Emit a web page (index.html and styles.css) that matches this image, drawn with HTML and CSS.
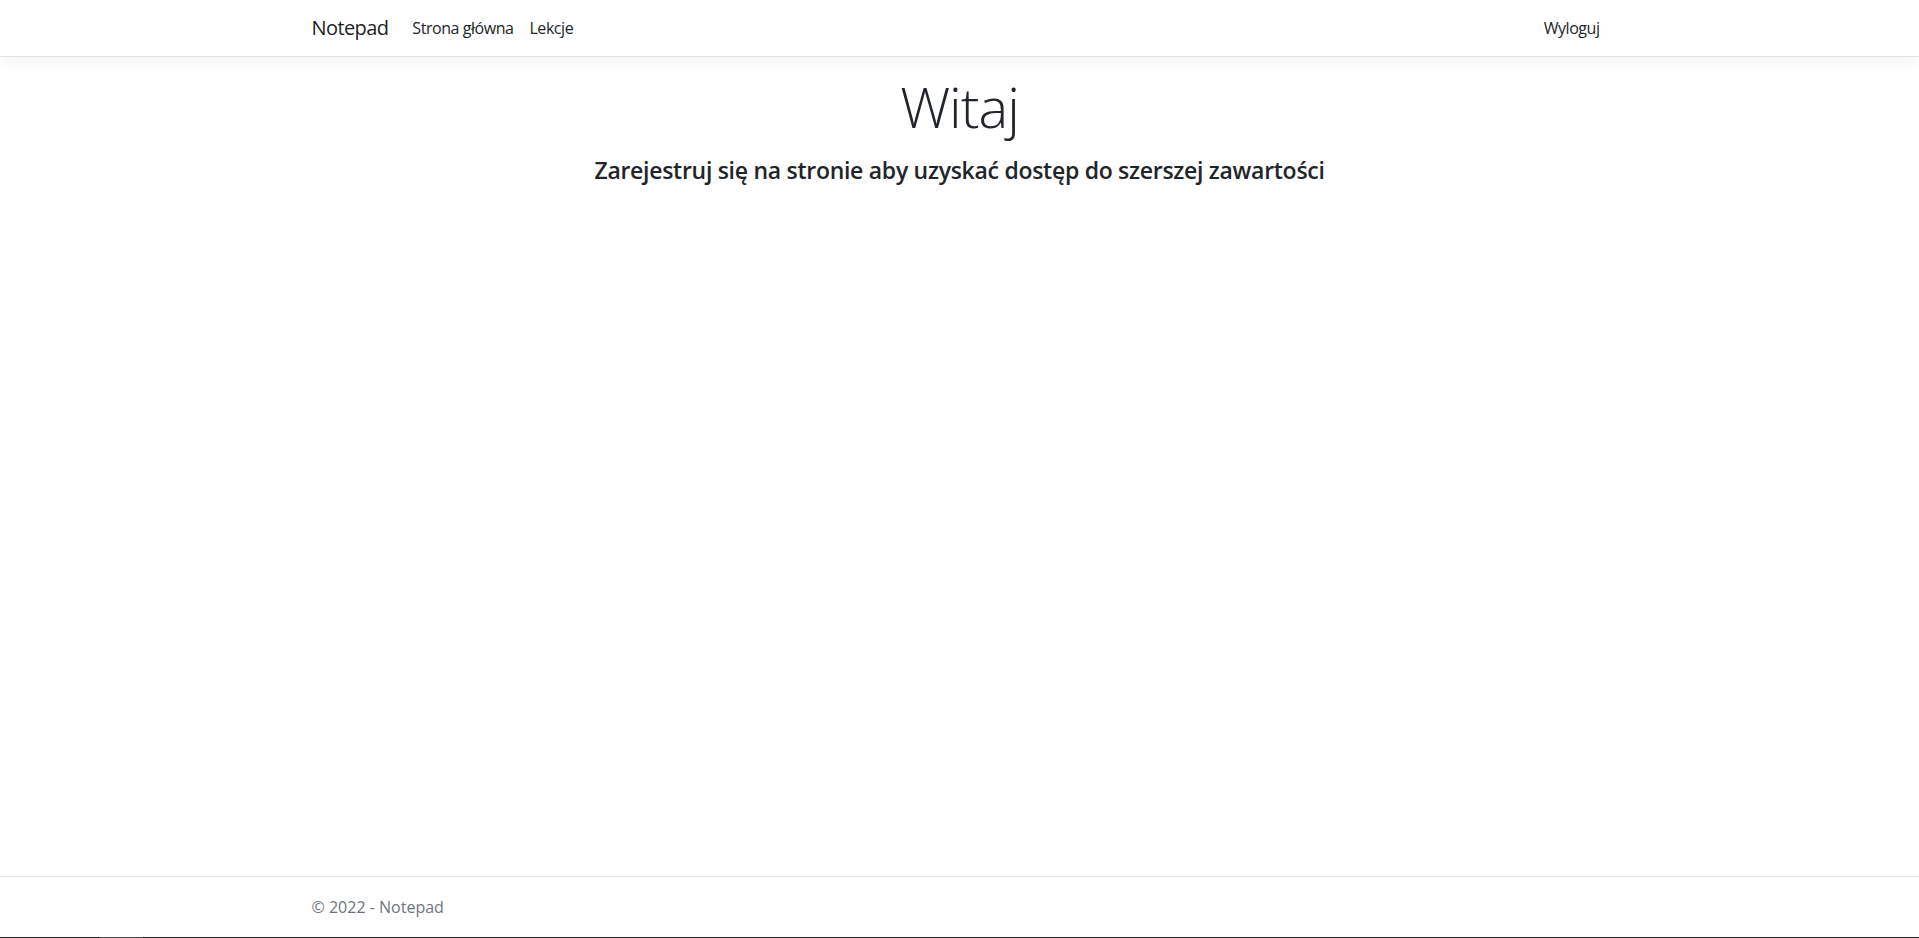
FILE: index.html
```html
<!DOCTYPE html>
<html lang="pl">
<head>
<meta charset="utf-8">
<title>Notepad</title>
<link rel="stylesheet" href="styles.css">
</head>
<body>
<header class="navbar">
  <div class="nav-inner">
    <a class="brand" href="#">Notepad</a>
    <ul class="nav-links">
      <li><a class="nav-link" href="#">Strona główna</a></li>
      <li><a class="nav-link" href="#">Lekcje</a></li>
    </ul>
    <ul class="nav-user">
      <li><a class="nav-link" href="#">Wyloguj</a></li>
    </ul>
  </div>
</header>
<main class="main">
  <div class="hero">
    <h1 class="title">Witaj</h1>
    <h4 class="subtitle">Zarejestruj się na stronie aby uzyskać dostęp do szerszej zawartości</h4>
  </div>
</main>
<footer class="footer">
  <div class="footer-inner">&copy; 2022 - Notepad</div>
</footer>
<div class="bottom-strip"><span class="strip-thumb"></span></div>
</body>
</html>
```
FILE: styles.css
```css
* { box-sizing: border-box; }
html, body { margin: 0; padding: 0; }
body {
  font-family: "Open Sans", "Noto Sans", sans-serif;
  font-size: 16px;
  line-height: 1.5;
  color: #212529;
  background: #fff;
  height: 100vh;
  display: flex;
  flex-direction: column;
  overflow: hidden;
}
a { text-decoration: none; }
ul { list-style: none; margin: 0; padding: 0; }

.navbar {
  padding: 8px 0;
  border-bottom: 1px solid #dee2e6;
  box-shadow: 0 4px 12px rgba(0,0,0,0.05);
  background: #fff;
}
.nav-inner {
  max-width: 1320px;
  margin: 0 auto;
  padding: 0 12px;
  display: flex;
  align-items: center;
}
.brand {
  font-size: 20px;
  line-height: 30px;
  padding: 5px 0;
  margin-right: 16px;
  letter-spacing: -0.6px;
  color: rgba(0,0,0,0.9);
}
.nav-links { display: flex; flex: 1; }
.nav-user { display: flex; }
.nav-link {
  display: block;
  padding: 8px;
  color: #212529;
  line-height: 24px;
  letter-spacing: -0.45px;
}

.main { flex: 1; padding-top: 16px; }
.hero { text-align: center; }
.title {
  font-size: 56px;
  font-weight: 300;
  line-height: 1.2;
  letter-spacing: -1px;
  margin: 0 0 17px;
}
.subtitle {
  font-size: 23px;
  font-weight: 600;
  line-height: 1.2;
  letter-spacing: -0.28px;
  margin: 0;
}

.footer {
  border-top: 1px solid #dee2e6;
  line-height: 60px;
  color: #6c757d;
  white-space: nowrap;
}
.footer-inner {
  max-width: 1320px;
  margin: 0 auto;
  padding: 0 12px;
}
.bottom-strip {
  height: 1px;
  background: #1f1f1f;
  display: flex;
}
.strip-thumb {
  margin-left: 99px;
  width: 44px;
  background: #4a4a4a;
}
```
